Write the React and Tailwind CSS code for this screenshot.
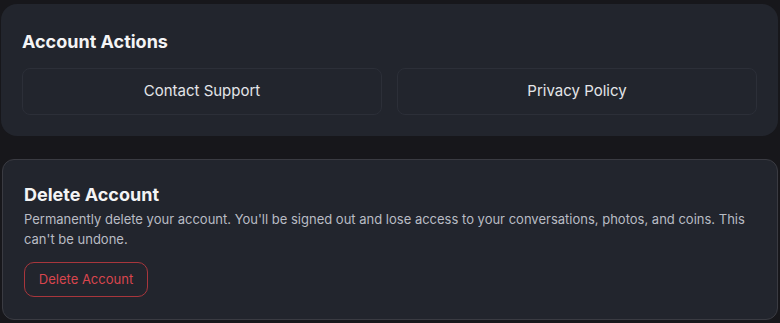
export default function App() {
  return (
    <div
      className="h-[323px] w-[780px] overflow-hidden bg-[#17171b] pt-1 pl-px pr-[2px]"
      style={{ fontFamily: "Inter, 'Noto Sans', sans-serif" }}
    >
      <section className="rounded-2xl bg-[#22252d] px-[21px] pt-[26px] pb-[21px]">
        <h2 className="text-[18px] font-bold leading-6 text-[#f4f4f5]">Account Actions</h2>
        <div className="mt-[14px] grid grid-cols-2 gap-[15px]">
          <button className="h-[47px] rounded-lg border border-[#2c2f38] bg-[#22252d] text-[15px] text-[#e4e5e9]">
            Contact Support
          </button>
          <button className="h-[47px] rounded-lg border border-[#2c2f38] bg-[#22252d] text-[15px] text-[#e4e5e9]">
            Privacy Policy
          </button>
        </div>
      </section>

      <section className="mt-[23px] ml-px h-[161px] rounded-xl border border-[#3a3b42] bg-[#22252d] px-[21px] pt-[21px]">
        <h2 className="text-[18px] font-bold leading-7 text-[#f4f4f5]">Delete Account</h2>
        <p className="text-[13px] leading-5 text-[#b9bcc4]">
          Permanently delete your account. You'll be signed out and lose access to your conversations, photos, and coins. This can't be undone.
        </p>
        <button className="mt-[13px] h-[35px] w-[124px] rounded-[10px] border border-[#a8363c] text-[13px] text-[#d9454d]">
          Delete Account
        </button>
      </section>
    </div>
  );
}
